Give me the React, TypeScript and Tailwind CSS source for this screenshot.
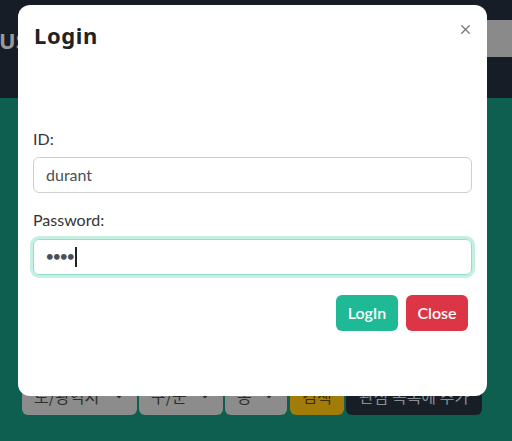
import { X, ChevronDown } from 'lucide-react';

const selects = [
  { label: '도/광역시', w: 'w-[115px]' },
  { label: '구/군', w: 'w-[84px]' },
  { label: '동', w: 'w-[62px]' },
];

function Background() {
  return (
    <div className="flex h-[441px] flex-col">
      <nav className="flex h-[98px] items-start justify-between bg-[#161d26]">
        <span className="mt-[24px] -ml-[1px] font-['Noto_Sans',sans-serif] text-[22px] font-bold text-[#9a9a9a]">
          US
        </span>
        <div className="mt-[20px] h-[37px] w-[25px] bg-[#8a8a8a]" />
      </nav>
      <section className="flex flex-1 items-end bg-[#0e5f4f] pb-[26px] pl-[22px]">
        <div className="flex gap-[2px] font-['Noto_Sans_CJK_KR',sans-serif] text-[16px]">
          {selects.map((s) => (
            <div
              key={s.label}
              className={`${s.w} flex h-[38px] items-center justify-between rounded-md bg-[#8c8c8c] px-3 text-[#2e2e2e]`}
            >
              <span>{s.label}</span>
              <ChevronDown size={12} strokeWidth={3} />
            </div>
          ))}
          <div className="ml-[1px] flex h-[38px] w-[54px] items-center justify-center rounded-md bg-[#a27c08] text-[#3a2e05]">
            검색
          </div>
          <div className="flex h-[38px] w-[136px] items-center justify-center rounded-md bg-[#171e26] text-[#8a8f94]">
            관심 목록에 추가
          </div>
        </div>
      </section>
    </div>
  );
}

function LoginModal() {
  return (
    <div className="absolute left-[18px] top-[5px] flex h-[391px] w-[469px] flex-col rounded-[12px] bg-white font-['Lato',sans-serif]">
      <div className="flex items-center justify-between px-4 pt-[14px]">
        <h5 className="font-['Noto_Sans',sans-serif] text-[22px] font-bold tracking-[0.6px] text-[#222]">
          Login
        </h5>
        <X size={15} strokeWidth={2} className="-mr-[2px] -mt-[12px] text-[#777]" />
      </div>
      <div className="flex flex-col px-[15px] pt-[77px]">
        <label className="text-[16px] leading-[20px] text-[#333]">ID:</label>
        <div className="mt-[8px] flex h-[36px] items-center rounded-md border border-[#cfcfcf] px-3 text-[16px] text-[#4a4f55]">
          durant
        </div>
        <label className="mt-[17px] text-[16px] leading-[20px] text-[#333]">Password:</label>
        <div className="mt-[9px] flex h-[36px] items-center rounded-md border border-[#8fdfca] px-3 text-[#4a4f55] shadow-[0_0_0_3px_#c6efe4]">
          <span className="text-[13px] font-bold tracking-[-0.5px]">••••</span>
          <span className="ml-[1px] h-[20px] w-[2px] bg-[#222]" />
        </div>
        <div className="mt-[20px] flex justify-end gap-2 pr-[4px]">
          <button className="h-[36px] w-[62px] rounded-md bg-[#20b996] text-[16px] font-semibold text-white">
            LogIn
          </button>
          <button className="h-[36px] w-[62px] rounded-md bg-[#dc3545] text-[16px] font-semibold text-white">
            Close
          </button>
        </div>
      </div>
    </div>
  );
}

export default function App() {
  return (
    <div className="relative h-[441px] w-[512px] overflow-hidden">
      <Background />
      <LoginModal />
    </div>
  );
}
